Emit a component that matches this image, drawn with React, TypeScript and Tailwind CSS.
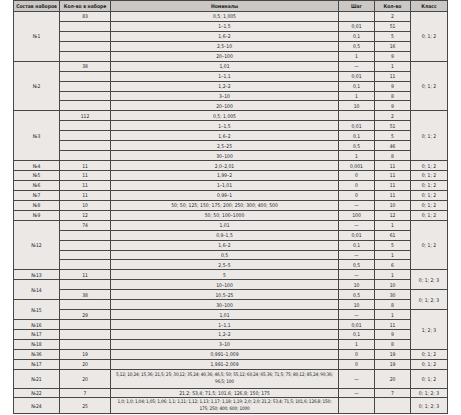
import React from 'react';

type Span = { text: string; span: number };

interface Row {
  set?: Span;
  qty: string;
  nom: React.ReactNode;
  step: string;
  count: string;
  cls?: Span;
  h?: string;
  long?: boolean;
}

const s = (text: string, span = 1): Span => ({ text, span });

// one row of the weights table; merged cells only appear on the first row of a span
const rows: Row[] = [
  { set: s('№1', 5), qty: '83', nom: '0,5; 1,005', step: '', count: '2', cls: s('0; 1; 2', 5) },
  { qty: '', nom: '1–1,5', step: '0,01', count: '51' },
  { qty: '', nom: '1,6–2', step: '0,1', count: '5' },
  { qty: '', nom: '2,5–10', step: '0,5', count: '16' },
  { qty: '', nom: '20–100', step: '1', count: '9' },

  { set: s('№2', 5), qty: '38', nom: '1,01', step: '—', count: '1', cls: s('0; 1; 2', 5) },
  { qty: '', nom: '1–1,1', step: '0,01', count: '11' },
  { qty: '', nom: '1,2–2', step: '0,1', count: '9' },
  { qty: '', nom: '3–10', step: '1', count: '8' },
  { qty: '', nom: '20–100', step: '10', count: '9' },

  { set: s('№3', 5), qty: '112', nom: '0,5; 1,005', step: '', count: '2', cls: s('0; 1; 2', 5) },
  { qty: '', nom: '1–1,5', step: '0,01', count: '51' },
  { qty: '', nom: '1,6–2', step: '0,1', count: '5' },
  { qty: '', nom: '2,5–25', step: '0,5', count: '46' },
  { qty: '', nom: '30–100', step: '1', count: '8' },

  { set: s('№4'), qty: '11', nom: '2,0–2,01', step: '0,001', count: '11', cls: s('0; 1; 2') },
  { set: s('№5'), qty: '11', nom: '1,99–2', step: '0', count: '11', cls: s('0; 1; 2') },
  { set: s('№6'), qty: '11', nom: '1–1,01', step: '0', count: '11', cls: s('0; 1; 2') },
  { set: s('№7'), qty: '11', nom: '0,99–1', step: '0', count: '11', cls: s('0; 1; 2') },
  { set: s('№8'), qty: '10', nom: '50; 50; 125; 150; 175; 200; 250; 300; 400; 500', step: '—', count: '10', cls: s('0; 1; 2') },
  { set: s('№9'), qty: '12', nom: '50; 50; 100–1000', step: '100', count: '12', cls: s('0; 1; 2') },

  { set: s('№12', 5), qty: '74', nom: '1,01', step: '—', count: '1', cls: s('0; 1; 2', 5) },
  { qty: '', nom: '0,9–1,5', step: '0,01', count: '61' },
  { qty: '', nom: '1,6–2', step: '0,1', count: '5' },
  { qty: '', nom: '0,5', step: '—', count: '1' },
  { qty: '', nom: '2,5–5', step: '0,5', count: '6' },

  { set: s('№13'), qty: '11', nom: '5', step: '—', count: '1', cls: s('0; 1; 2; 3', 2) },
  { set: s('№14', 2), qty: '', nom: '10–100', step: '10', count: '10' },
  { qty: '38', nom: '10,5–25', step: '0,5', count: '30', cls: s('0; 1; 2; 3', 2) },
  { set: s('№15', 2), qty: '', nom: '30–100', step: '10', count: '8' },
  { qty: '29', nom: '1,01', step: '—', count: '1', cls: s('1; 2; 3', 4) },
  { set: s('№16'), qty: '', nom: '1–1,1', step: '0,01', count: '11' },
  { set: s('№17'), qty: '', nom: '1,2–2', step: '0,1', count: '9' },
  { set: s('№18'), qty: '', nom: '3–10', step: '1', count: '8' },

  { set: s('№36'), qty: '19', nom: '0,991–1,009', step: '0', count: '19', cls: s('0; 1; 2') },
  { set: s('№17'), qty: '20', nom: '1,991–2,009', step: '0', count: '19', cls: s('0; 1; 2') },
  {
    set: s('№21'),
    qty: '20',
    nom: (
      <>
        5,12; 10,24; 15,36; 21,5; 25; 30,12; 35,24; 40,36; 46,5; 50; 55,12; 60,24; 65,36; 71,5; 75; 80,12; 85,24; 90,36;
        <br />
        96,5; 100
      </>
    ),
    step: '—',
    count: '20',
    cls: s('0; 1; 2'),
    h: 'h-[19px]',
    long: true,
  },
  { set: s('№22'), qty: '7', nom: '21,2; 53,4; 71,5; 101,6; 126,8; 150; 175', step: '—', count: '7', cls: s('0; 1; 2; 3'), h: 'h-[9.5px]' },
  {
    set: s('№24'),
    qty: '25',
    nom: (
      <>
        1,0; 1,0; 1,04; 1,05; 1,06; 1,1; 1,11; 1,12; 1,13; 1,17; 1,18; 1,19; 2,0; 2,0; 21,2; 53,4; 71,5; 101,6; 126,8; 150;
        <br />
        175; 250; 400; 600; 1000
      </>
    ),
    step: '',
    count: '',
    cls: s('0; 1; 2; 3'),
    h: 'h-[16px]',
    long: true,
  },
];

const cell = 'border border-[#474747] bg-[#ebe8e6] p-0 text-center align-middle whitespace-nowrap';

export default function App() {
  return (
    <div className="min-h-[415px] bg-white pl-[13px]">
      <table
        className="table-fixed w-[434px] border-collapse text-[5px] leading-[6px] text-[#262626]"
        style={{ fontFamily: '"Liberation Sans Narrow", "DejaVu Sans Condensed", "Liberation Sans", sans-serif', fontStretch: 'condensed' }}
      >
        <colgroup>
          <col className="w-[46px]" />
          <col className="w-[51px]" />
          <col className="w-[228px]" />
          <col className="w-[36px]" />
          <col className="w-[36px]" />
          <col className="w-[37px]" />
        </colgroup>
        <thead>
          <tr className="h-[11px]">
            {['Состав наборов', 'Кол-во в наборе', 'Номиналы', 'Шаг', 'Кол-во', 'Класс'].map((t) => (
              <th key={t} className={`${cell} !bg-[#cac7c5] font-bold`}>
                {t}
              </th>
            ))}
          </tr>
        </thead>
        <tbody>
          {rows.map((r, i) => (
            <tr key={i} className={r.h ?? 'h-[9.94px]'}>
              {r.set && (
                <td rowSpan={r.set.span} className={cell}>
                  {r.set.text}
                </td>
              )}
              <td className={cell}>{r.qty}</td>
              <td className={r.long ? `${cell} text-[4.7px] tracking-[-0.16px] leading-[6.5px]` : cell}>{r.nom}</td>
              <td className={cell}>{r.step}</td>
              <td className={cell}>{r.count}</td>
              {r.cls && (
                <td rowSpan={r.cls.span} className={cell}>
                  {r.cls.text}
                </td>
              )}
            </tr>
          ))}
        </tbody>
      </table>
    </div>
  );
}
